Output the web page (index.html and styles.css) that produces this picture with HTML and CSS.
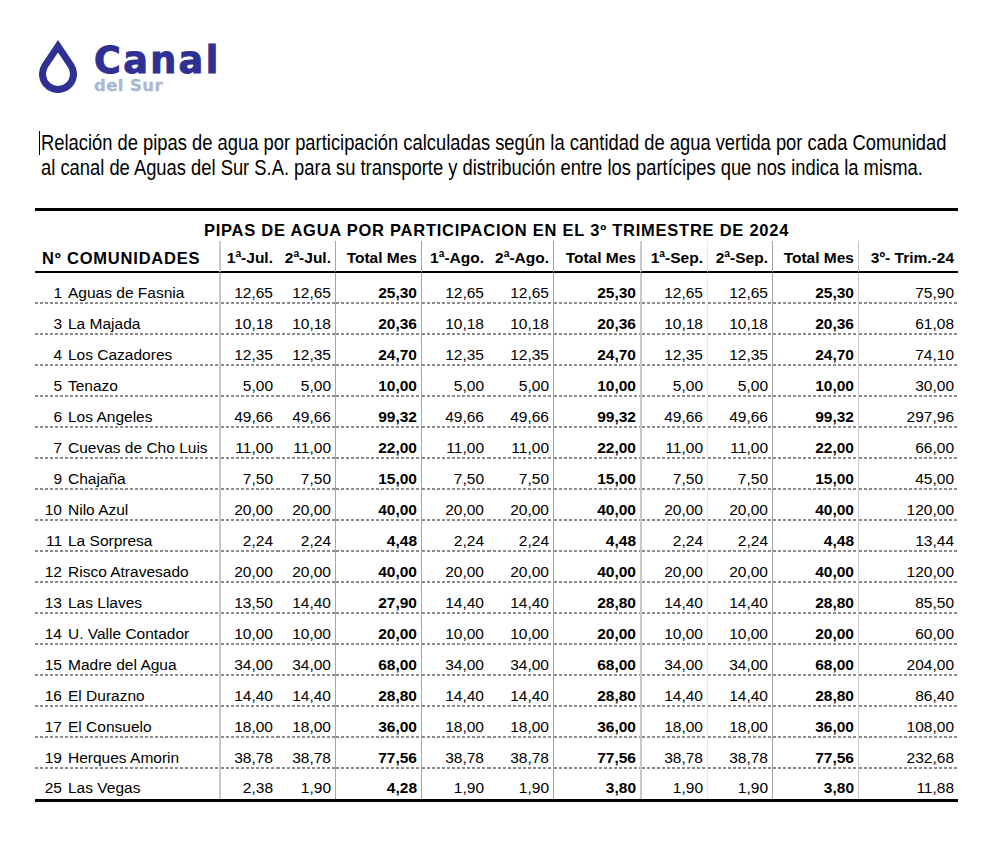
FILE: index.html
```html
<!DOCTYPE html>
<html lang="es">
<head>
<meta charset="utf-8">
<title>Canal del Sur - Pipas de agua</title>
<link rel="stylesheet" href="styles.css">
</head>
<body>
<header class="brand">
  <svg class="drop" width="38" height="53" viewBox="0 0 38 53" aria-hidden="true">
    <path fill-rule="evenodd" d="M19 0 L34.75 23.4 A19 19 0 1 1 3.25 23.4 Z M19 12.5 L28.95 27.3 A12 12 0 1 1 9.05 27.3 Z"/>
  </svg>
  <div class="brand-text">
    <div class="brand-name">Canal</div>
    <div class="brand-sub">del Sur</div>
  </div>
</header>

<div class="intro">
  <span class="caret"></span>
  <p class="intro-text">Relación de pipas de agua por participación calculadas según la cantidad de agua vertida por cada Comunidad<br>al canal de Aguas del Sur S.A. para su transporte y distribución entre los partícipes que nos indica la misma.</p>
</div>

<table class="pipas">
  <colgroup>
    <col class="c-name"><col class="c-q1"><col class="c-q1"><col class="c-tot">
    <col class="c-q2"><col class="c-q2b"><col class="c-tot2">
    <col class="c-q2"><col class="c-q2b"><col class="c-tot">
    <col class="c-trim">
  </colgroup>
  <thead>
    <tr class="title-row"><th colspan="11" class="title">PIPAS DE AGUA POR PARTICIPACION EN EL 3º TRIMESTRE DE 2024</th></tr>
    <tr class="head-row">
      <th class="h-name">Nº COMUNIDADES</th>
      <th class="l-soft">1ª-Jul.</th><th>2ª-Jul.</th><th class="l-mid">Total Mes</th>
      <th class="l-mid">1ª-Ago.</th><th>2ª-Ago.</th><th class="l-mid">Total Mes</th>
      <th class="l-soft">1ª-Sep.</th><th class="l-faint">2ª-Sep.</th><th class="l-mid">Total Mes</th>
      <th class="l-light">3º- Trim.-24</th>
    </tr>
  </thead>
  <tbody>
    <tr><td class="name"><span class="num">1</span>Aguas de Fasnia</td><td class="l-soft">12,65</td><td>12,65</td><td class="l-mid tot">25,30</td><td class="l-mid">12,65</td><td>12,65</td><td class="l-mid tot">25,30</td><td class="l-soft">12,65</td><td class="l-faint">12,65</td><td class="l-mid tot">25,30</td><td class="l-light trim">75,90</td></tr>
    <tr><td class="name"><span class="num">3</span>La Majada</td><td class="l-soft">10,18</td><td>10,18</td><td class="l-mid tot">20,36</td><td class="l-mid">10,18</td><td>10,18</td><td class="l-mid tot">20,36</td><td class="l-soft">10,18</td><td class="l-faint">10,18</td><td class="l-mid tot">20,36</td><td class="l-light trim">61,08</td></tr>
    <tr><td class="name"><span class="num">4</span>Los Cazadores</td><td class="l-soft">12,35</td><td>12,35</td><td class="l-mid tot">24,70</td><td class="l-mid">12,35</td><td>12,35</td><td class="l-mid tot">24,70</td><td class="l-soft">12,35</td><td class="l-faint">12,35</td><td class="l-mid tot">24,70</td><td class="l-light trim">74,10</td></tr>
    <tr><td class="name"><span class="num">5</span>Tenazo</td><td class="l-soft">5,00</td><td>5,00</td><td class="l-mid tot">10,00</td><td class="l-mid">5,00</td><td>5,00</td><td class="l-mid tot">10,00</td><td class="l-soft">5,00</td><td class="l-faint">5,00</td><td class="l-mid tot">10,00</td><td class="l-light trim">30,00</td></tr>
    <tr><td class="name"><span class="num">6</span>Los Angeles</td><td class="l-soft">49,66</td><td>49,66</td><td class="l-mid tot">99,32</td><td class="l-mid">49,66</td><td>49,66</td><td class="l-mid tot">99,32</td><td class="l-soft">49,66</td><td class="l-faint">49,66</td><td class="l-mid tot">99,32</td><td class="l-light trim">297,96</td></tr>
    <tr><td class="name"><span class="num">7</span>Cuevas de Cho Luis</td><td class="l-soft">11,00</td><td>11,00</td><td class="l-mid tot">22,00</td><td class="l-mid">11,00</td><td>11,00</td><td class="l-mid tot">22,00</td><td class="l-soft">11,00</td><td class="l-faint">11,00</td><td class="l-mid tot">22,00</td><td class="l-light trim">66,00</td></tr>
    <tr><td class="name"><span class="num">9</span>Chajaña</td><td class="l-soft">7,50</td><td>7,50</td><td class="l-mid tot">15,00</td><td class="l-mid">7,50</td><td>7,50</td><td class="l-mid tot">15,00</td><td class="l-soft">7,50</td><td class="l-faint">7,50</td><td class="l-mid tot">15,00</td><td class="l-light trim">45,00</td></tr>
    <tr><td class="name"><span class="num">10</span>Nilo Azul</td><td class="l-soft">20,00</td><td>20,00</td><td class="l-mid tot">40,00</td><td class="l-mid">20,00</td><td>20,00</td><td class="l-mid tot">40,00</td><td class="l-soft">20,00</td><td class="l-faint">20,00</td><td class="l-mid tot">40,00</td><td class="l-light trim">120,00</td></tr>
    <tr><td class="name"><span class="num">11</span>La Sorpresa</td><td class="l-soft">2,24</td><td>2,24</td><td class="l-mid tot">4,48</td><td class="l-mid">2,24</td><td>2,24</td><td class="l-mid tot">4,48</td><td class="l-soft">2,24</td><td class="l-faint">2,24</td><td class="l-mid tot">4,48</td><td class="l-light trim">13,44</td></tr>
    <tr><td class="name"><span class="num">12</span>Risco Atravesado</td><td class="l-soft">20,00</td><td>20,00</td><td class="l-mid tot">40,00</td><td class="l-mid">20,00</td><td>20,00</td><td class="l-mid tot">40,00</td><td class="l-soft">20,00</td><td class="l-faint">20,00</td><td class="l-mid tot">40,00</td><td class="l-light trim">120,00</td></tr>
    <tr><td class="name"><span class="num">13</span>Las Llaves</td><td class="l-soft">13,50</td><td>14,40</td><td class="l-mid tot">27,90</td><td class="l-mid">14,40</td><td>14,40</td><td class="l-mid tot">28,80</td><td class="l-soft">14,40</td><td class="l-faint">14,40</td><td class="l-mid tot">28,80</td><td class="l-light trim">85,50</td></tr>
    <tr><td class="name"><span class="num">14</span>U. Valle Contador</td><td class="l-soft">10,00</td><td>10,00</td><td class="l-mid tot">20,00</td><td class="l-mid">10,00</td><td>10,00</td><td class="l-mid tot">20,00</td><td class="l-soft">10,00</td><td class="l-faint">10,00</td><td class="l-mid tot">20,00</td><td class="l-light trim">60,00</td></tr>
    <tr><td class="name"><span class="num">15</span>Madre del Agua</td><td class="l-soft">34,00</td><td>34,00</td><td class="l-mid tot">68,00</td><td class="l-mid">34,00</td><td>34,00</td><td class="l-mid tot">68,00</td><td class="l-soft">34,00</td><td class="l-faint">34,00</td><td class="l-mid tot">68,00</td><td class="l-light trim">204,00</td></tr>
    <tr><td class="name"><span class="num">16</span>El Durazno</td><td class="l-soft">14,40</td><td>14,40</td><td class="l-mid tot">28,80</td><td class="l-mid">14,40</td><td>14,40</td><td class="l-mid tot">28,80</td><td class="l-soft">14,40</td><td class="l-faint">14,40</td><td class="l-mid tot">28,80</td><td class="l-light trim">86,40</td></tr>
    <tr><td class="name"><span class="num">17</span>El Consuelo</td><td class="l-soft">18,00</td><td>18,00</td><td class="l-mid tot">36,00</td><td class="l-mid">18,00</td><td>18,00</td><td class="l-mid tot">36,00</td><td class="l-soft">18,00</td><td class="l-faint">18,00</td><td class="l-mid tot">36,00</td><td class="l-light trim">108,00</td></tr>
    <tr><td class="name"><span class="num">19</span>Herques Amorin</td><td class="l-soft">38,78</td><td>38,78</td><td class="l-mid tot">77,56</td><td class="l-mid">38,78</td><td>38,78</td><td class="l-mid tot">77,56</td><td class="l-soft">38,78</td><td class="l-faint">38,78</td><td class="l-mid tot">77,56</td><td class="l-light trim">232,68</td></tr>
    <tr class="last"><td class="name"><span class="num">25</span>Las Vegas</td><td class="l-soft">2,38</td><td>1,90</td><td class="l-mid tot">4,28</td><td class="l-mid">1,90</td><td>1,90</td><td class="l-mid tot">3,80</td><td class="l-soft">1,90</td><td class="l-faint">1,90</td><td class="l-mid tot">3,80</td><td class="l-light trim">11,88</td></tr>
  </tbody>
</table>
</body>
</html>
```

FILE: styles.css
```css
html, body {
  margin: 0;
  padding: 0;
  background: #ffffff;
}

body {
  font-family: "Liberation Sans", Arial, sans-serif;
  color: #000;
}

/* ---------- brand ---------- */
.brand {
  display: flex;
  align-items: flex-start;
  padding: 40px 0 0 39px;
  height: 54px;
}

.drop {
  display: block;
  fill: #2e3192;
  flex: none;
}

.brand-text {
  margin-left: 17px;
  font-family: "DejaVu Sans", sans-serif;
  font-weight: bold;
}

.brand-name {
  color: #2e3192;
  font-size: 36.5px;
  line-height: 30px;
  letter-spacing: 2.4px;
  margin-top: 6px;
  -webkit-text-stroke: 1px #2e3192;
}

.brand-sub {
  color: #a9b8d4;
  font-size: 16.5px;
  line-height: 16px;
  margin-top: 2px;
  letter-spacing: 0.4px;
  -webkit-text-stroke: 0.3px #a9b8d4;
}

/* ---------- intro ---------- */
.intro {
  display: flex;
  align-items: flex-start;
  margin: 36px 0 0 39px;
  width: 940px;
  overflow: visible;
}

.caret {
  flex: none;
  width: 1px;
  height: 24px;
  margin-top: 1px;
  background: #000;
}

.intro-text {
  flex: none;
  margin: 0 0 0 1px;
  font-size: 22.5px;
  line-height: 25px;
  white-space: nowrap;
  transform: scaleX(0.816);
  transform-origin: left top;
}

/* ---------- table ---------- */
.pipas {
  margin: 28px 0 0 35px;
  width: 923px;
  table-layout: fixed;
  border-collapse: separate;
  border-spacing: 0;
  border-top: 3px solid #000;
  border-bottom: 3px solid #000;
  font-size: 15.5px;
  line-height: 18px;
}

.c-name { width: 184px; }
.c-q1 { width: 58px; }
.c-tot { width: 86px; }
.c-tot2 { width: 87px; }
.c-q2 { width: 67px; }
.c-q2b { width: 65px; }
.c-trim { width: 100px; }

.pipas th,
.pipas td {
  padding: 0 4px 2px 0;
  text-align: right;
  vertical-align: bottom;
  white-space: nowrap;
}

.title-row { height: 30px; }

.pipas th.title {
  text-align: center;
  padding: 0 0 2px 0;
  font-size: 16.5px;
  letter-spacing: 0.75px;
  font-weight: bold;
}

.head-row { height: 32px; }

.head-row th {
  border-bottom: 2px solid #000;
  padding-bottom: 4px;
  font-weight: bold;
}

.pipas th.h-name {
  text-align: left;
  padding-left: 7px;
  font-size: 16.5px;
  letter-spacing: 0.8px;
}

.pipas tbody tr { height: 31px; }
.pipas tbody tr.last { height: 30px; }

.pipas tbody td {
  background-image: linear-gradient(to right, #8c8c8c 3px, transparent 3px);
  background-size: 5px 2px;
  background-repeat: repeat-x;
  background-position: left bottom;
}

.pipas tbody tr.last td {
  background-image: none;
}

.pipas td.name {
  text-align: left;
  padding-left: 6px;
}

.num {
  display: inline-block;
  width: 21px;
  text-align: right;
  margin-right: 6px;
}

.tot { font-weight: bold; }
.trim { padding-right: 5px; }

/* column separators */
.l-soft { border-left: 2px solid #c8c8c8; }
.l-mid { border-left: 1px solid #a6a6a6; }
.l-light { border-left: 1px solid #c8c8c8; }
.l-faint { border-left: 1px solid #e8e8e8; }
```
